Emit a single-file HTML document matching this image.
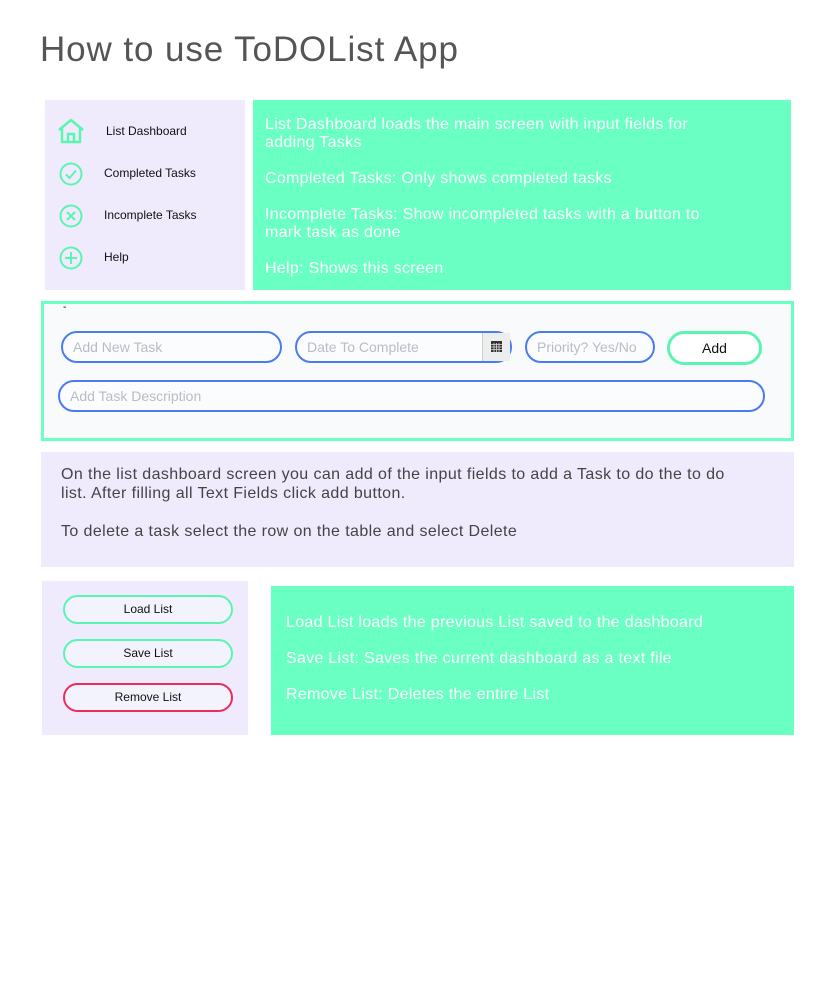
<!DOCTYPE html>
<html><head><meta charset="utf-8"><style>
*{margin:0;padding:0;box-sizing:border-box}
body{width:840px;height:1000px;background:#fff;position:relative;font-family:"Liberation Sans",sans-serif;overflow:hidden}
.a{position:absolute}
.t{color:#fff;font-size:16px;letter-spacing:.3px;line-height:18px;white-space:nowrap}
.d{color:#444;font-size:16px;letter-spacing:.4px;line-height:19px;white-space:nowrap}
.lav{background:#efebfd}
.grn{background:#6affc3}
.nav{font-size:12px;color:#111;left:104px}
.inp{position:absolute;border:2px solid #4a7cf0;border-radius:16px;background:#fbfcfd;color:#b8bcc4;font-size:14px;padding-left:10px;line-height:28px}
.btn{position:absolute;left:63px;width:170px;height:29px;border:2.5px solid #5af5b0;border-radius:15px;background:#f3f3fd;font-size:12px;text-align:center;line-height:24px;color:#111}
</style></head><body>
<div class="a" style="left:40px;top:30px;font-size:35px;color:#555;letter-spacing:.9px">How to use ToDOList App</div>

<div class="a lav" style="left:45px;top:100px;width:200px;height:190px"></div>
<svg class="a" style="left:57px;top:118px" width="28" height="26" viewBox="0 0 28 26" fill="none" stroke="#5af5b0" stroke-width="2.5" stroke-linejoin="round"><path d="M2 12 L14 2 L26 12 M5 10 V24 H23 V10 M11 24 V16 H17 V24"/></svg>
<div class="a nav" style="left:106px;top:124px">List Dashboard</div>
<svg class="a" style="left:59px;top:162px" width="24" height="24" fill="none" stroke="#5af5b0" stroke-width="2"><circle cx="12" cy="12" r="10.5"/><path d="M7 12.5 L10.5 16 L17 8.5"/></svg>
<div class="a nav" style="top:166px">Completed Tasks</div>
<svg class="a" style="left:59px;top:204px" width="24" height="24" fill="none" stroke="#5af5b0" stroke-width="2"><circle cx="12" cy="12" r="10.5"/><path d="M8 8 L16 16 M16 8 L8 16"/></svg>
<div class="a nav" style="top:208px">Incomplete Tasks</div>
<svg class="a" style="left:59px;top:246px" width="24" height="24" fill="none" stroke="#5af5b0" stroke-width="2"><circle cx="12" cy="12" r="10.5"/><path d="M12 6 V18 M6 12 H18"/></svg>
<div class="a nav" style="top:250px">Help</div>

<div class="a grn" style="left:253px;top:100px;width:538px;height:190px"></div>
<div class="a t" style="left:265px;top:116px">List Dashboard loads the main screen with input fields for<br>adding Tasks<br><br>Completed Tasks: Only shows completed tasks<br><br>Incomplete Tasks: Show incompleted tasks with a button to<br>mark task as done<br><br>Help: Shows this screen</div>

<div class="a" style="left:41px;top:301px;width:753px;height:140px;border:3px solid #6affc3;background:#f9fafb"></div>
<div class="a" style="left:63px;top:302px;font-size:10px;color:#000">-</div>
<div class="inp" style="left:61px;top:331px;width:221px;height:32px">Add New Task</div>
<div class="inp" style="left:295px;top:331px;width:217px;height:32px">Date To Complete</div>
<div class="a" style="left:482px;top:333px;width:28px;height:28px;background:#eceeee;border-left:1px solid #ccc"></div>
<svg class="a" style="left:491px;top:341px" width="11" height="11"><rect width="11" height="11" fill="#333"/><path d="M0 3.5H11M0 6H11M0 8.5H11M3 2V11M5.5 2V11M8 2V11" stroke="#ddd" stroke-width=".8"/></svg>
<div class="inp" style="left:525px;top:331px;width:130px;height:32px">Priority? Yes/No</div>
<div class="a" style="left:667px;top:331px;width:95px;height:34px;border:3px solid #5af5b0;border-radius:17px;background:#fff;text-align:center;line-height:28px;font-size:14px;color:#111">Add</div>
<div class="inp" style="left:58px;top:380px;width:707px;height:32px">Add Task Description</div>

<div class="a lav" style="left:41px;top:452px;width:753px;height:115px"></div>
<div class="a d" style="left:61px;top:465px">On the list dashboard screen you can add of the input fields to add a Task to do the to do<br>list. After filling all Text Fields click add button.<br><br>To delete a task select the row on the table and select Delete</div>

<div class="a lav" style="left:42px;top:581px;width:206px;height:154px"></div>
<div class="btn" style="top:595px">Load List</div>
<div class="btn" style="top:639px">Save List</div>
<div class="btn" style="top:683px;border-color:#ee2b5a">Remove List</div>

<div class="a grn" style="left:271px;top:586px;width:523px;height:149px"></div>
<div class="a t" style="left:286px;top:614px">Load List loads the previous List saved to the dashboard<br><br>Save List: Saves the current dashboard as a text file<br><br>Remove List: Deletes the entire List</div>
</body></html>
